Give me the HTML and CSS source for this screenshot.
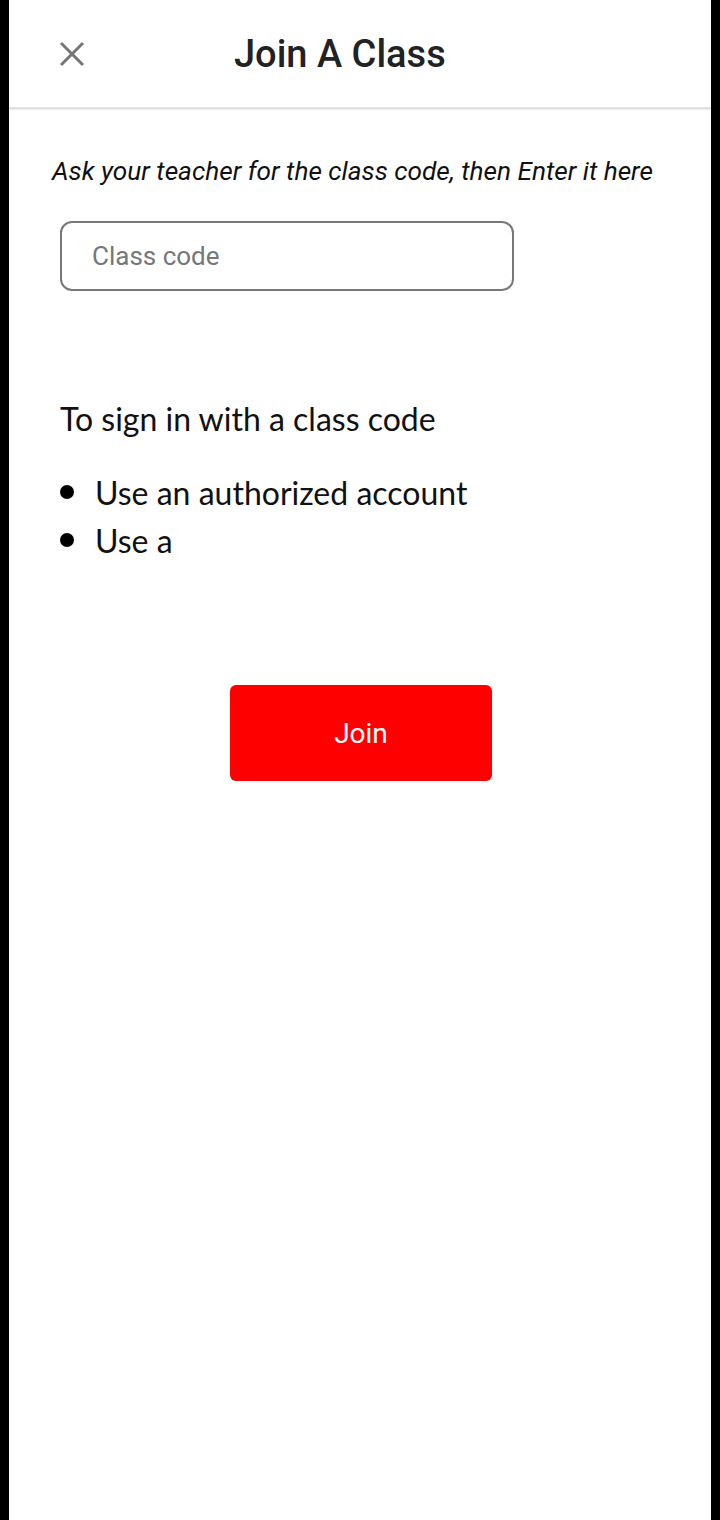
FILE: index.html
```html
<!DOCTYPE html>
<html>
<head>
<meta charset="utf-8">
<link rel="stylesheet" href="styles.css">
</head>
<body>
<div class="screen">
  <header class="header">
    <svg class="close" viewBox="0 0 26 26" width="26" height="26">
      <path d="M2 2 L24 24 M24 2 L2 24" stroke="#757575" stroke-width="3" fill="none"/>
    </svg>
    <h1 class="title">Join A Class</h1>
  </header>
  <main class="content">
    <p class="hint">Ask your teacher for the class code, then Enter it here</p>
    <div class="field"><span class="placeholder">Class code</span></div>
    <h2 class="subhead">To sign in with a class code</h2>
    <ul class="list">
      <li><span class="dot"></span>Use an authorized account</li>
      <li><span class="dot"></span>Use a</li>
    </ul>
    <div class="actions"><button class="join">Join</button></div>
  </main>
</div>
</body>
</html>
```

FILE: styles.css
```css
html, body {
  margin: 0;
  padding: 0;
  background: #000;
}
.screen {
  margin: 0 9px;
  width: 702px;
  height: 1520px;
  background: #fff;
  font-family: Roboto, "Liberation Sans", sans-serif;
}
.header {
  height: 108px;
  display: flex;
  align-items: center;
  padding-left: 50px;
  box-shadow: 0 1px 2px rgba(0,0,0,0.2);
  border-bottom: 1px solid #e4e4e4;
  box-sizing: border-box;
}
.close {
  display: block;
}
.title {
  margin: 0 0 0 149px;
  font-size: 38px;
  font-weight: 500;
  color: #222;
}
.content {
  padding: 0 0 0 43px;
}
.hint {
  margin: 48px 0 0 0;
  font-style: italic;
  font-size: 26.2px;
  color: #111;
}
.field {
  margin: 35px 0 0 8px;
  width: 454px;
  height: 70px;
  border: 2px solid #777;
  border-radius: 12px;
  box-sizing: border-box;
  display: flex;
  align-items: center;
  padding-left: 30px;
}
.placeholder {
  font-size: 26px;
  color: #777;
}
.subhead {
  margin: 108px 0 0 8px;
  font-family: Lato, "Noto Sans", sans-serif;
  font-weight: 400;
  font-size: 32px;
  color: #111;
}
.list {
  list-style: none;
  margin: 30px 0 0 8px;
  padding: 0;
}
.list li {
  display: flex;
  align-items: center;
  font-family: Lato, "Noto Sans", sans-serif;
  font-size: 32px;
  color: #111;
  height: 48px;
}
.dot {
  width: 14px;
  height: 14px;
  border-radius: 50%;
  background: #000;
  margin-right: 21px;
}
.actions {
  display: flex;
  justify-content: center;
  padding-right: 43px;
  margin-top: 121px;
}
.join {
  width: 262px;
  height: 96px;
  background: #ff0000;
  border: none;
  border-radius: 6px;
  color: #fff;
  font-family: Roboto, "Liberation Sans", sans-serif;
  font-size: 28px;
  margin-left: 2px;
}
```
